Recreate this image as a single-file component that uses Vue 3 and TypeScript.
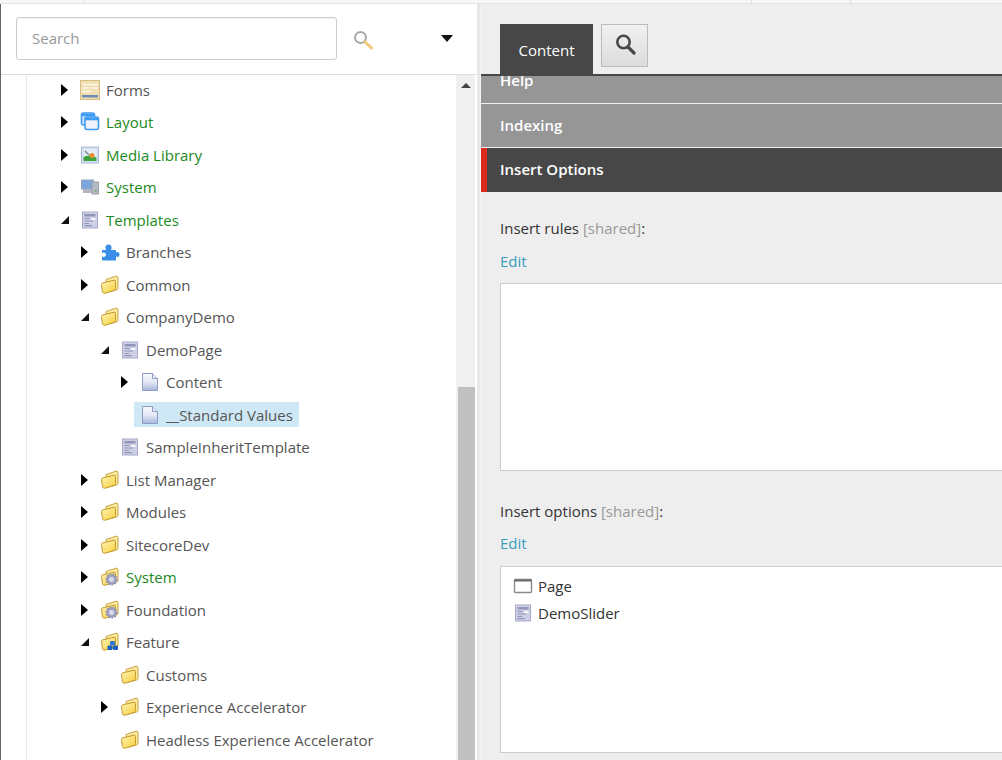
<script setup lang="ts">
interface TreeNode {
  label: string
  depth: number
  icon: string
  arrow?: 'right' | 'down'
  green?: boolean
  selected?: boolean
}

const nodes: TreeNode[] = [
  { label: 'Forms', depth: 0, icon: 'forms', arrow: 'right' },
  { label: 'Layout', depth: 0, icon: 'layout', arrow: 'right', green: true },
  { label: 'Media Library', depth: 0, icon: 'media', arrow: 'right', green: true },
  { label: 'System', depth: 0, icon: 'system', arrow: 'right', green: true },
  { label: 'Templates', depth: 0, icon: 'template', arrow: 'down', green: true },
  { label: 'Branches', depth: 1, icon: 'puzzle', arrow: 'right' },
  { label: 'Common', depth: 1, icon: 'folder', arrow: 'right' },
  { label: 'CompanyDemo', depth: 1, icon: 'folder', arrow: 'down' },
  { label: 'DemoPage', depth: 2, icon: 'template', arrow: 'down' },
  { label: 'Content', depth: 3, icon: 'doc', arrow: 'right' },
  { label: '__Standard Values', depth: 3, icon: 'doc', selected: true },
  { label: 'SampleInheritTemplate', depth: 2, icon: 'template' },
  { label: 'List Manager', depth: 1, icon: 'folder', arrow: 'right' },
  { label: 'Modules', depth: 1, icon: 'folder', arrow: 'right' },
  { label: 'SitecoreDev', depth: 1, icon: 'folder', arrow: 'right' },
  { label: 'System', depth: 1, icon: 'foldergear', arrow: 'right', green: true },
  { label: 'Foundation', depth: 1, icon: 'foldergear', arrow: 'right' },
  { label: 'Feature', depth: 1, icon: 'folderblue', arrow: 'down' },
  { label: 'Customs', depth: 2, icon: 'folder' },
  { label: 'Experience Accelerator', depth: 2, icon: 'folder', arrow: 'right' },
  { label: 'Headless Experience Accelerator', depth: 2, icon: 'folder' },
]

const indent = (depth: number) => ({ paddingLeft: `${depth * 20}px` })
</script>

<template>
  <div class="app">
    <svg class="defs" width="0" height="0">
      <defs>
        <linearGradient id="fold" x1="0" y1="0" x2="1" y2="1">
          <stop offset="0" stop-color="#fff6b8" />
          <stop offset="1" stop-color="#f6cf3a" />
        </linearGradient>
        <linearGradient id="page" x1="0" y1="0" x2="0" y2="1">
          <stop offset="0" stop-color="#f8f9fd" />
          <stop offset="0.5" stop-color="#e4e9f5" />
          <stop offset="1" stop-color="#a9b6da" />
        </linearGradient>
        <symbol id="folder" viewBox="0 0 20 20">
          <path d="M6 4.5 L16 1.2 Q18 0.8 18 3 V13 Q18 14.5 16.5 15 L7 17.5 Z" fill="#fbeaa0" stroke="#c9a23e" />
          <path d="M1.5 9.5 Q1.5 8 3 7.8 L14 5.2 Q15.5 5 15.5 6.5 V13.5 Q15.5 15 14 15.4 L5 18.2 Q2.8 18.6 2.4 16.4 Z" fill="url(#fold)" stroke="#c49a2c" />
        </symbol>
        <symbol id="foldergear" viewBox="0 0 20 20">
          <use href="#folder" width="20" height="20" />
          <circle cx="11.5" cy="12.5" r="5" fill="#a3a5c6" stroke="#8f90b0" stroke-width="2" stroke-dasharray="2 1" />
          <circle cx="11.5" cy="12.5" r="2.4" fill="#dcddea" />
        </symbol>
        <symbol id="folderblue" viewBox="0 0 20 20">
          <use href="#folder" width="20" height="20" />
          <rect x="10" y="9" width="5" height="4.5" rx="1" fill="#2f78d8" />
          <rect x="7.5" y="13.5" width="5" height="4.5" rx="1" fill="#1d5fbe" />
          <rect x="13" y="13.5" width="5" height="4.5" rx="1" fill="#1d5fbe" />
        </symbol>
        <symbol id="template" viewBox="0 0 20 20">
          <rect x="2.5" y="2" width="15" height="16" fill="#cdcfe4" stroke="#a9abca" />
          <rect x="4.5" y="4" width="11" height="2.5" fill="#9396ba" />
          <path d="M4.5 8.5 H9.5 M4.5 11 H13 M4.5 13.5 H9 M4.5 15.7 H12" stroke="#9295b8" stroke-width="1.2" />
          <rect x="11" y="8" width="4.5" height="2" fill="#f4f4fa" />
        </symbol>
        <symbol id="doc" viewBox="0 0 20 20">
          <path d="M2.5 1.5 H12.5 L17.5 6.5 V18.5 H2.5 Z" fill="url(#page)" stroke="#8d9cc4" />
          <path d="M12.5 1.5 V6.5 H17.5" fill="#e4e9f5" stroke="#8d9cc4" />
        </symbol>
        <symbol id="forms" viewBox="0 0 20 20">
          <rect x="0.5" y="0.5" width="19" height="19" fill="#f1dfb4" stroke="#d6bd83" />
          <path d="M2.5 4.5 H17.5 M2.5 8 H9 M11 8 H17.5 M2.5 11.5 H11" stroke="#fdf8ea" stroke-width="1.6" />
          <rect x="2" y="15" width="16" height="2.5" fill="#6f8cb5" />
        </symbol>
        <symbol id="layout" viewBox="0 0 20 20">
          <rect x="1.5" y="1" width="13" height="12" rx="2" fill="#cfe4fb" stroke="#3e9bf5" stroke-width="1.6" />
          <path d="M2 3 H14" stroke="#3e9bf5" stroke-width="2.4" />
          <rect x="5" y="5" width="13.5" height="12.5" rx="2" fill="#eef3fb" stroke="#3e9bf5" stroke-width="1.6" />
          <path d="M5.5 7 H18" stroke="#3e9bf5" stroke-width="2.6" />
        </symbol>
        <symbol id="media" viewBox="0 0 20 20">
          <rect x="1.5" y="2" width="17" height="16" fill="#d5dff0" stroke="#a9bcdc" />
          <rect x="3.5" y="4" width="13" height="12" fill="#e4edf6" />
          <path d="M3.5 16 V12 Q9 9.5 16.5 12.5 V16 Z" fill="#3aa33c" />
          <circle cx="12" cy="10.5" r="2.5" fill="#ef8a2a" />
          <path d="M5 6 L9 10" stroke="#7b8794" stroke-width="1.4" />
        </symbol>
        <symbol id="system" viewBox="0 0 20 20">
          <rect x="1.5" y="3" width="12" height="9" fill="#7ba6dc" stroke="#9aa6b8" />
          <rect x="3" y="12" width="9" height="4" fill="#b0b6c2" />
          <rect x="12" y="5" width="6.5" height="12" fill="#b6bac4" stroke="#9a9faa" />
          <rect x="15" y="13" width="1.5" height="1.5" fill="#4ca34c" />
        </symbol>
        <symbol id="puzzle" viewBox="0 0 20 20">
          <path d="M2 8 H6 C5 6 5 2.5 8.5 2.5 C12 2.5 12 6 11 8 H16 V10.5 C18 9.5 19.5 10.5 19.5 12.5 C19.5 14.5 18 15.5 16 14.5 V18.5 H2 V14.5 C4 15.5 6 14.5 6 12.8 C6 11 4 10 2 11 Z" fill="#3a8eea" />
        </symbol>
      </defs>
    </svg>

    <div class="top-strip">
      <i class="tick t1" />
      <i class="tick t2" />
      <i class="tick t3" />
    </div>

    <div class="columns">
      <aside class="left">
        <div class="search-bar">
          <input class="search-input" placeholder="Search">
          <svg class="lens" width="20" height="20" viewBox="0 0 20 20">
            <circle cx="7.5" cy="7.5" r="5.5" fill="#fff" stroke="#a9a9a9" stroke-width="2" />
            <path d="M12 12 L18.5 18" stroke="#f2c877" stroke-width="3" stroke-linecap="round" />
          </svg>
          <span class="drop" />
        </div>
        <div class="tree-wrap">
          <div class="tree">
            <div v-for="node in nodes" :key="node.label + node.depth" class="row" :style="indent(node.depth)">
              <span class="arrow-cell">
                <i v-if="node.arrow" :class="node.arrow" />
              </span>
              <span class="node" :class="{ selected: node.selected }">
                <svg class="node-icon" width="20" height="20"><use :href="`#${node.icon}`" width="20" height="20" /></svg>
                <span :class="{ green: node.green }">{{ node.label }}</span>
              </span>
            </div>
          </div>
          <div class="scrollbar">
            <i class="up" />
            <div class="thumb" />
          </div>
        </div>
      </aside>

      <div class="splitter" />

      <main class="content">
        <div class="tabs">
          <div class="tab">Content</div>
          <button class="find" type="button">
            <svg width="22" height="22" viewBox="0 0 22 22">
              <circle cx="9.5" cy="9" r="6.2" fill="none" stroke="#484848" stroke-width="2.6" />
              <path d="M14 14 L20 20" stroke="#484848" stroke-width="3.2" stroke-linecap="round" />
            </svg>
          </button>
        </div>
        <div class="sections">
          <div class="section help">Help</div>
          <div class="section">Indexing</div>
          <div class="section active">Insert Options</div>
        </div>
        <div class="fields">
          <div class="field-label">Insert rules <span class="shared">[shared]</span>:</div>
          <a class="edit">Edit</a>
          <div class="box rules" />
          <div class="field-label second">Insert options <span class="shared">[shared]</span>:</div>
          <a class="edit tight">Edit</a>
          <div class="box options">
            <div class="opt">
              <svg width="20" height="20" viewBox="0 0 20 20">
                <rect x="1.5" y="3.5" width="17" height="13" rx="1" fill="#fff" stroke="#8a8a8a" stroke-width="1.4" />
                <path d="M1.5 4.5 H18.5" stroke="#6b6b6b" stroke-width="2" />
              </svg>
              Page
            </div>
            <div class="opt">
              <svg width="20" height="20"><use href="#template" width="20" height="20" /></svg>
              DemoSlider
            </div>
          </div>
        </div>
      </main>
    </div>
  </div>
</template>

<style>
html, body {
  overflow: hidden;
}
</style>

<style scoped>
.app {
  position: relative;
  width: 1002px;
  height: 760px;
  overflow: hidden;
  background: #fff;
  font-family: "Open Sans", sans-serif;
  font-size: 15px;
  color: #555;
}

.defs {
  position: absolute;
}

.top-strip {
  display: flex;
  height: 3px;
  background: #f7f7f7;
  border-bottom: 1px solid #e3e3e3;
}

.tick {
  display: block;
  width: 1px;
  height: 3px;
  background: #dedede;
}

.t1 {
  margin-left: 83px;
}

.t2 {
  margin-left: 667px;
}

.t3 {
  margin-left: 98px;
}

.columns {
  display: flex;
  height: 756px;
}

.left {
  width: 476px;
  flex: none;
  border-left: 1px solid #666;
  display: flex;
  flex-direction: column;
}

.search-bar {
  height: 71px;
  flex: none;
  box-sizing: border-box;
  display: flex;
  align-items: flex-start;
  padding: 13px 24px 0 15px;
  border-bottom: 1px solid #dcdcdc;
}

.search-input {
  width: 321px;
  height: 43px;
  box-sizing: border-box;
  border: 1px solid #ccc;
  border-radius: 3px;
  padding: 0 15px 2px;
  font: inherit;
  color: #555;
  outline: none;
  box-shadow: inset 0 1px 1px rgba(0, 0, 0, 0.05);
}

.search-input::placeholder {
  color: #999;
  opacity: 1;
}

.lens {
  margin: 13px 0 0 16px;
}

.drop {
  margin: 18px 0 0 auto;
  width: 0;
  height: 0;
  border-left: 6px solid transparent;
  border-right: 6px solid transparent;
  border-top: 7px solid #111;
}

.tree-wrap {
  flex: 1;
  min-height: 0;
  display: flex;
}

.tree {
  flex: 1;
  min-width: 0;
  overflow: hidden;
  border-left: 1px solid #e6e6e6;
  margin-left: 25px;
  padding-left: 33px;
}

.row {
  height: 32.5px;
  display: flex;
  align-items: center;
  white-space: nowrap;
}

.row:first-child {
  margin-top: -1.5px;
}

.arrow-cell {
  width: 14px;
  flex: none;
  display: flex;
  align-items: center;
  padding-left: 1px;
  box-sizing: border-box;
}

.arrow-cell .right {
  width: 0;
  height: 0;
  border-top: 6px solid transparent;
  border-bottom: 6px solid transparent;
  border-left: 7px solid #000;
}

.arrow-cell .down {
  width: 0;
  height: 0;
  border-left: 8px solid transparent;
  border-bottom: 8px solid #111;
}

.node {
  display: flex;
  align-items: center;
  gap: 6px;
  height: 25px;
  padding: 0 6px;
}

.node.selected {
  background: #cfe8f5;
}

.node-icon {
  flex: none;
}

.green {
  color: #1c8a1c;
}

.scrollbar {
  position: relative;
  width: 19px;
  flex: none;
  background: #f0f0f0;
  margin-right: 2px;
  padding-left: 2px;
  box-sizing: border-box;
}

.up {
  position: absolute;
  left: 5px;
  top: 8px;
  width: 0;
  height: 0;
  border-left: 5px solid transparent;
  border-right: 5px solid transparent;
  border-bottom: 5px solid #444;
}

.thumb {
  margin-top: 312px;
  height: 380px;
  background: #c0c0c0;
}

.splitter {
  width: 4px;
  flex: none;
  background: #e8e8e8;
  border-right: 1px solid #f4f4f4;
  box-sizing: border-box;
}

.content {
  flex: 1;
  min-width: 0;
  background: #eee;
  overflow: hidden;
}

.tabs {
  height: 70px;
  box-sizing: border-box;
  padding: 20px 0 0 19px;
  display: flex;
  align-items: flex-start;
  gap: 8px;
}

.tab {
  width: 93px;
  height: 50px;
  background: #474747;
  color: #fff;
  display: flex;
  align-items: center;
  justify-content: center;
  padding-top: 1px;
  box-sizing: border-box;
}

.find {
  width: 47px;
  height: 43px;
  padding: 0 0 4px;
  border: 1px solid #bdbdbd;
  background: linear-gradient(#f1f1f1, #dcdcdc);
  display: flex;
  align-items: center;
  justify-content: center;
}

.sections {
  border-top: 2px solid #474747;
}

.section {
  height: 43px;
  line-height: 43px;
  margin-bottom: 1px;
  padding-left: 19px;
  background: #969696;
  color: #fff;
  font-weight: 600;
}

.section.help {
  height: 27px;
  line-height: 8px;
  overflow: hidden;
}

.section.active {
  height: 44px;
  line-height: 42px;
  margin-bottom: 0;
  background: #474747;
  border-left: 6px solid #dd2a1e;
  padding-left: 13px;
}

.fields {
  padding: 25px 0 0 19px;
}

.field-label {
  height: 22px;
  line-height: 22px;
  color: #333;
}

.field-label.second {
  margin-top: 29px;
}

.shared {
  color: #999;
}

.edit {
  display: block;
  height: 22px;
  line-height: 22px;
  margin-top: 11px;
  color: #3a9dc0;
}

.edit.tight {
  margin-top: 10px;
}

.box {
  width: 620px;
  background: #fff;
  border: 1px solid #ccc;
  box-sizing: border-box;
}

.rules {
  height: 188px;
  margin-top: 11px;
}

.options {
  height: 187px;
  margin-top: 12px;
  padding-top: 5px;
}

.opt {
  display: flex;
  align-items: center;
  gap: 5px;
  height: 27px;
  padding-left: 12px;
  color: #333;
}
</style>
